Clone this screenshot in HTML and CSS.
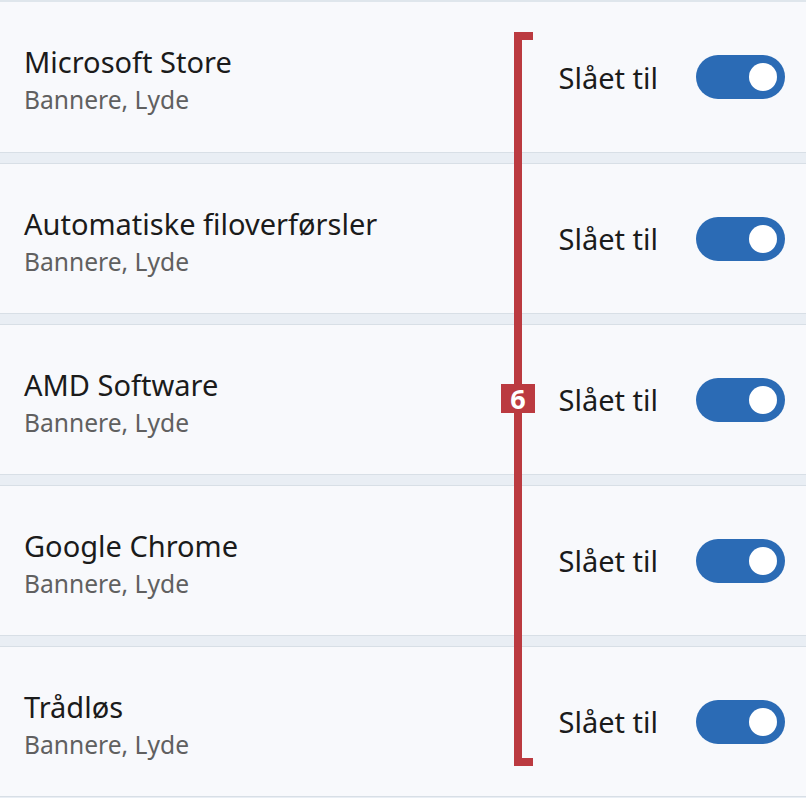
FILE: index.html
```html
<!DOCTYPE html>
<html lang="da">
<head>
<meta charset="utf-8">
<title>Meddelelser</title>
<link rel="stylesheet" href="styles.css">
</head>
<body>
<div class="list">
  <div class="row">
    <div class="info"><div class="title">Microsoft Store</div><div class="sub">Bannere, Lyde</div></div>
    <div class="ctrl"><span class="state">Slået til</span><span class="toggle"><span class="knob"></span></span></div>
  </div>
  <div class="row">
    <div class="info"><div class="title">Automatiske filoverførsler</div><div class="sub">Bannere, Lyde</div></div>
    <div class="ctrl"><span class="state">Slået til</span><span class="toggle"><span class="knob"></span></span></div>
  </div>
  <div class="row">
    <div class="info"><div class="title">AMD Software</div><div class="sub">Bannere, Lyde</div></div>
    <div class="ctrl"><span class="state">Slået til</span><span class="toggle"><span class="knob"></span></span></div>
  </div>
  <div class="row">
    <div class="info"><div class="title">Google Chrome</div><div class="sub">Bannere, Lyde</div></div>
    <div class="ctrl"><span class="state">Slået til</span><span class="toggle"><span class="knob"></span></span></div>
  </div>
  <div class="row">
    <div class="info"><div class="title">Trådløs</div><div class="sub">Bannere, Lyde</div></div>
    <div class="ctrl"><span class="state">Slået til</span><span class="toggle"><span class="knob"></span></span></div>
  </div>
</div>
<div class="bracket"><span class="badge">6</span></div>
</body>
</html>
```
FILE: styles.css
```css
html, body {
  margin: 0;
  padding: 0;
}
body {
  width: 806px;
  height: 798px;
  overflow: hidden;
  background: #e9eef4;
  font-family: "Noto Sans", "Open Sans", sans-serif;
  position: relative;
}
.list {
  display: flex;
  flex-direction: column;
  gap: 10px;
  border-top: 2px solid #dfe6ec;
}
.row {
  height: 151px;
  box-sizing: border-box;
  background: #f8f9fc;
  border-top: 1px solid #d8dfe6;
  border-bottom: 1px solid #d8dfe6;
  display: flex;
  align-items: center;
  justify-content: space-between;
  padding: 0 21px 0 24px;
}
.row:first-child { border-top: none; }
.info {
  display: flex;
  flex-direction: column;
  margin-top: 6px;
}
.title {
  font-size: 29px;
  line-height: 38px;
  margin-bottom: 2px;
  color: #1b1b1b;
}
.sub {
  font-size: 24.6px;
  line-height: 34px;
  color: #606060;
}
.ctrl {
  display: flex;
  align-items: center;
  gap: 38px;
}
.state {
  font-size: 29px;
  color: #1b1b1b;
}
.toggle {
  width: 89px;
  height: 44px;
  border-radius: 22px;
  background: #2b6bb5;
  display: flex;
  align-items: center;
  justify-content: flex-end;
  padding-right: 8px;
  box-sizing: border-box;
}
.knob {
  width: 28px;
  height: 28px;
  border-radius: 50%;
  background: #ffffff;
}
.bracket {
  position: absolute;
  left: 514px;
  top: 32px;
  width: 19px;
  height: 734px;
  box-sizing: border-box;
  border: 8px solid #bb3a40;
  border-right: none;
}
.badge {
  position: absolute;
  left: -21px;
  top: 344px;
  width: 34px;
  height: 29px;
  background: #bb3a40;
  color: #ffffff;
  font-family: "Open Sans", "Noto Sans", sans-serif;
  font-weight: 700;
  font-size: 27px;
  line-height: 29px;
  text-align: center;
}
```
